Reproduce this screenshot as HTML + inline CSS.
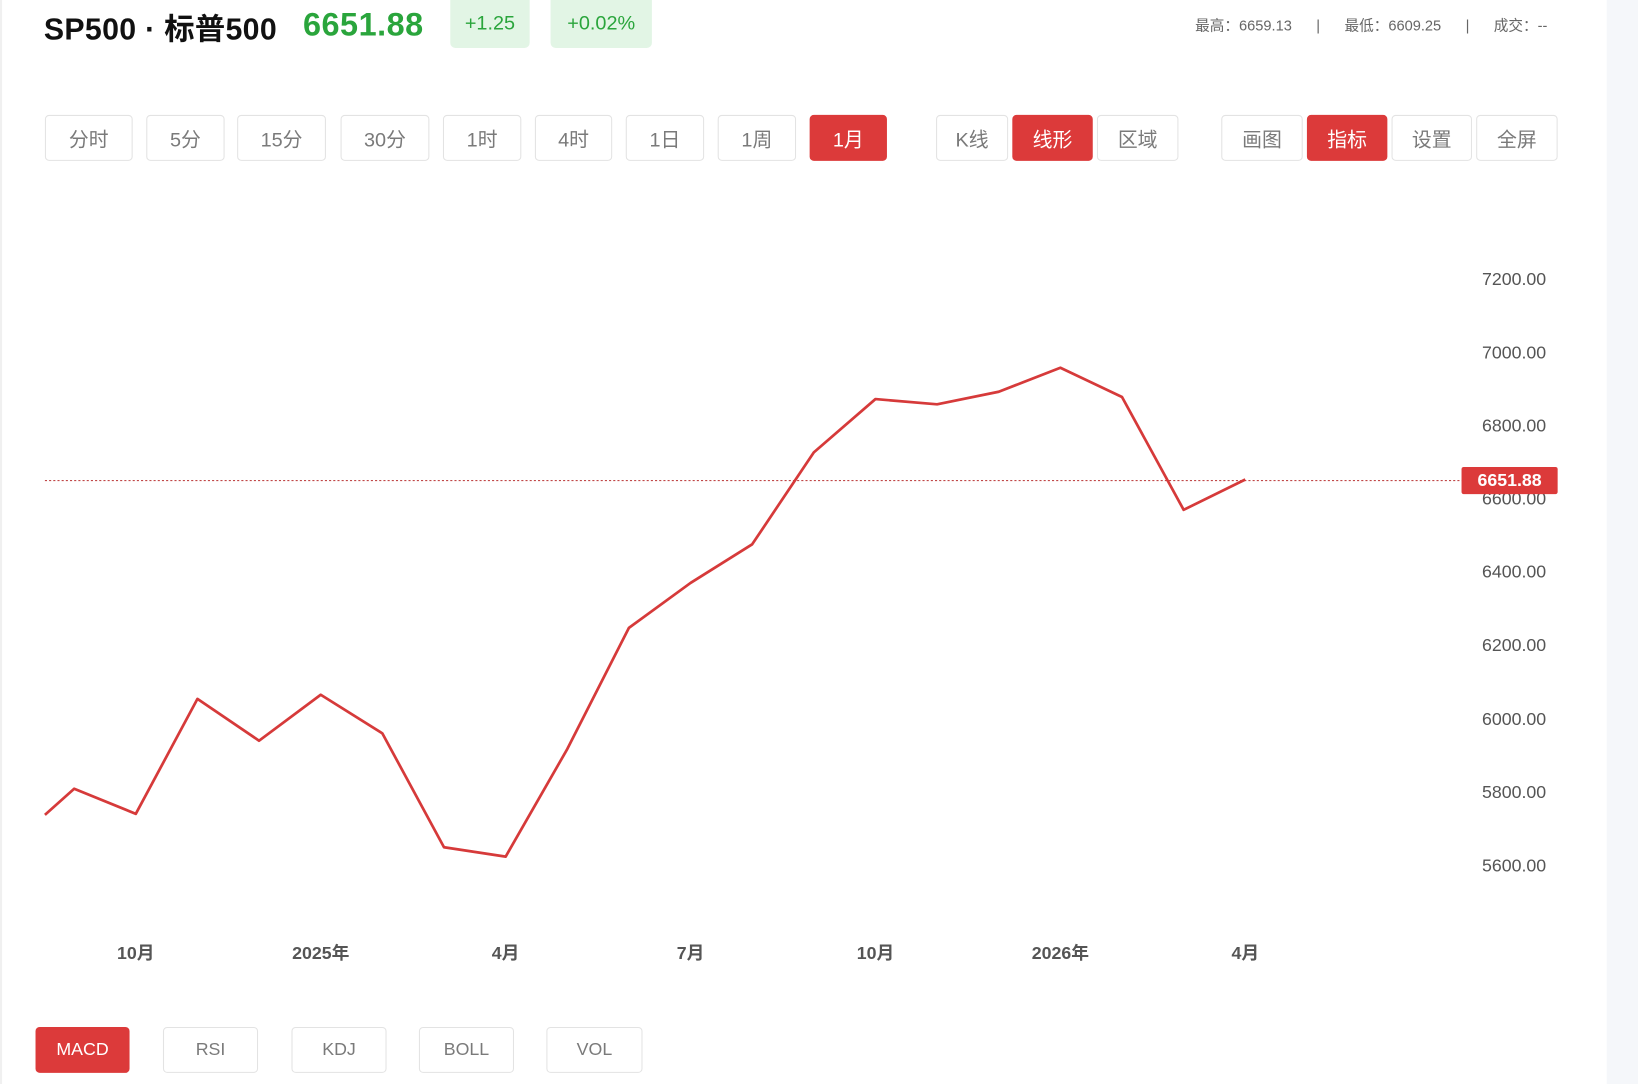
<!DOCTYPE html>
<html><head><meta charset="utf-8"><style>
html,body{margin:0;padding:0;width:1638px;height:1084px;overflow:hidden;background:#fff;font-family:"Liberation Sans","Noto Sans CJK SC",sans-serif;}
#w{position:absolute;left:0;top:0;width:1568px;height:1038px;transform:scale(1.0447);transform-origin:0 0;}
.a{position:absolute;}
.b{position:absolute;top:110px;height:44px;border:1px solid #e3e3e3;border-radius:4px;box-sizing:border-box;color:#7a7a7a;font-size:19px;display:flex;align-items:center;justify-content:center;background:#fff;}
.c{position:absolute;top:983px;height:44px;border:1px solid #e3e3e3;border-radius:4px;box-sizing:border-box;color:#7a7a7a;font-size:17px;display:flex;align-items:center;justify-content:center;background:#fff;}
.r{background:#dc3a3a;border-color:#dc3a3a;color:#fff;}
.y{position:absolute;left:1400px;width:80px;text-align:right;font-size:17px;color:#555;}
.x{position:absolute;top:898px;font-size:17px;color:#555;font-weight:bold;transform:translateX(-50%);}
</style></head><body><div id="w">
<div class="a" style="left:1538px;top:0;width:30px;height:1038px;background:#f5f7fa"></div>
<div class="a" style="left:0;top:0;width:2px;height:1038px;background:#f0f0f0"></div>
<div class="a" style="left:42px;top:5px;font-size:29px;font-weight:bold;color:#111;letter-spacing:0.3px">SP500 · 标普500</div>
<div class="a" style="left:290px;top:6px;font-size:31px;font-weight:bold;color:#2aa53c;letter-spacing:0.5px">6651.88</div>
<div class="a" style="left:431px;top:0;width:76px;height:46px;background:#e2f5e5;border-radius:0 0 5px 5px;color:#2aa53c;font-size:19px;display:flex;align-items:center;justify-content:center">+1.25</div>
<div class="a" style="left:527px;top:0;width:97px;height:46px;background:#e2f5e5;border-radius:0 0 5px 5px;color:#2aa53c;font-size:19px;display:flex;align-items:center;justify-content:center">+0.02%</div>
<div class="a" style="left:1144px;top:14px;font-size:14px;color:#666;white-space:pre">最高：6659.13      |      最低：6609.25      |      成交：--</div>
<div class="b" style="left:43px;width:84px">分时</div>
<div class="b" style="left:140px;width:75px">5分</div>
<div class="b" style="left:227px;width:85px">15分</div>
<div class="b" style="left:326px;width:85px">30分</div>
<div class="b" style="left:424px;width:75px">1时</div>
<div class="b" style="left:512px;width:74px">4时</div>
<div class="b" style="left:599px;width:75px">1日</div>
<div class="b" style="left:687px;width:75px">1周</div>
<div class="b r" style="left:775px;width:74px">1月</div>
<div class="b" style="left:896px;width:69px">K线</div>
<div class="b r" style="left:969px;width:77px">线形</div>
<div class="b" style="left:1050px;width:78px">区域</div>
<div class="b" style="left:1169px;width:78px">画图</div>
<div class="b r" style="left:1251px;width:77px">指标</div>
<div class="b" style="left:1332px;width:77px">设置</div>
<div class="b" style="left:1413px;width:78px">全屏</div>
<div class="y" style="top:258px">7200.00</div>
<div class="y" style="top:328px">7000.00</div>
<div class="y" style="top:398px">6800.00</div>
<div class="y" style="top:468px">6600.00</div>
<div class="y" style="top:538px">6400.00</div>
<div class="y" style="top:608px">6200.00</div>
<div class="y" style="top:679px">6000.00</div>
<div class="y" style="top:749px">5800.00</div>
<div class="y" style="top:819px">5600.00</div>
<svg class="a" style="left:0;top:0" width="1568" height="1038">
<line x1="43" y1="460" x2="1400" y2="460" stroke="#c04848" stroke-width="1" stroke-dasharray="2,2"/>
<polyline fill="none" stroke="#d63a3a" stroke-width="2.6" stroke-linejoin="round" points="43,780 71,755 130,779 189,669 248,709 307,665 366,702 425,811 484,820 543,717 602,601 661,558 720,521 779,433 838,382 897,387 956,375 1015,352 1074,380 1133,488 1192,459"/>
</svg>
<div class="a" style="left:1399px;top:447px;width:92px;height:26px;background:#dc3a3a;border-radius:2px;color:#fff;font-weight:bold;font-size:17px;display:flex;align-items:center;justify-content:center">6651.88</div>
<div class="x" style="left:130px">10月</div>
<div class="x" style="left:307px">2025年</div>
<div class="x" style="left:484px">4月</div>
<div class="x" style="left:661px">7月</div>
<div class="x" style="left:838px">10月</div>
<div class="x" style="left:1015px">2026年</div>
<div class="x" style="left:1192px">4月</div>
<div class="c r" style="left:34px;width:90px">MACD</div>
<div class="c" style="left:156px;width:91px">RSI</div>
<div class="c" style="left:279px;width:91px">KDJ</div>
<div class="c" style="left:401px;width:91px">BOLL</div>
<div class="c" style="left:523px;width:92px">VOL</div>
</div></body></html>
